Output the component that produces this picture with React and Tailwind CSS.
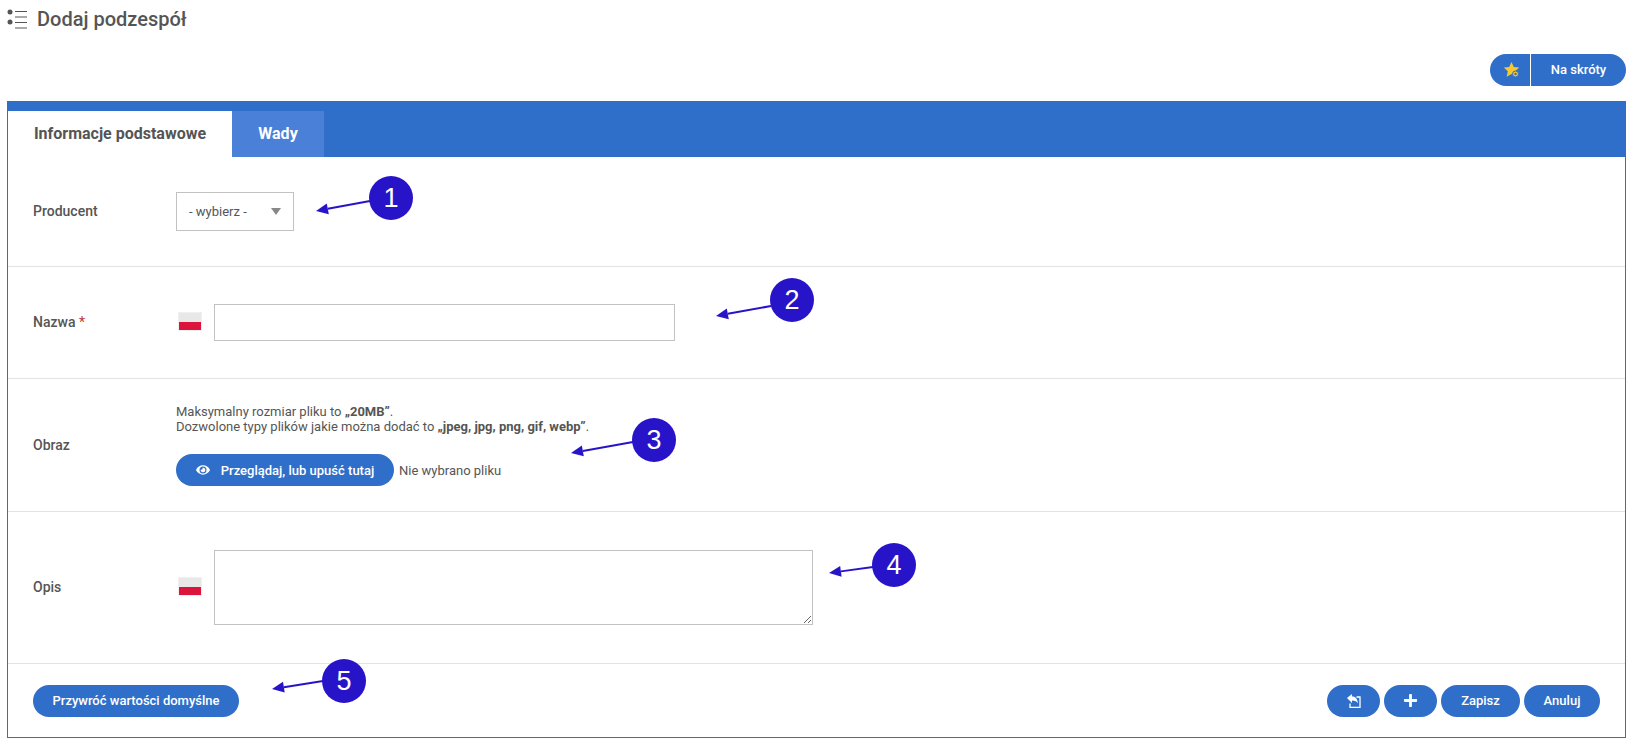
import { FaEye, FaPlus } from 'react-icons/fa'

function PillButton({ className = '', children }) {
    return (
        <button className={`h-8 rounded-full bg-[#306fc9] text-white text-[13px] font-medium flex items-center justify-center ${className}`}>
            {children}
        </button>
    )
}

function Flag() {
    return (
        <div className="w-[24px] h-[19px] ml-[2px] mb-[2px] flex flex-col shrink-0 border border-[#f0f0f0]">
            <div className="flex-1 bg-[#e8e8e8]" />
            <div className="flex-1 bg-[#dc143c]" />
        </div>
    )
}

function Row({ label, required, className = '', children }) {
    return (
        <div className={`flex items-center border-b border-[#e3e3e3] pl-[25px] ${className}`}>
            <div className="w-[143px] text-[14px] font-medium text-[#555555]">
                {label}
                {required && <span className="text-[#c0392b] font-normal"> *</span>}
            </div>
            {children}
        </div>
    )
}

function ListIcon() {
    return (
        <svg width="20" height="20" viewBox="0 0 20 20" className="shrink-0">
            <circle cx="3" cy="3" r="2.5" fill="#555555" />
            <circle cx="3" cy="13" r="2.5" fill="#555555" />
            <path d="M8 2.500h12M8 8h12M8 13.500h12M8 19h12" stroke="#555555" strokeWidth="1" />
        </svg>
    )
}

function StarIcon() {
    return (
        <svg width="18" height="18" viewBox="0 0 18 18">
            <path d="M8.500 1l2.300 5 5.400.6-4 3.700 1.100 5.400-4.800-2.800-4.800 2.800 1.100-5.400-4-3.700 5.400-.6z" fill="#f7c72c" />
            <circle cx="12.500" cy="13" r="3" fill="#f7c72c" stroke="#306fc9" strokeWidth="1" />
            <circle cx="12.500" cy="13" r="1.200" fill="#306fc9" />
        </svg>
    )
}

function BackIcon() {
    return (
        <svg width="14" height="14" viewBox="0 0 14 14">
            <path d="M9.500 3h3.500v10.300H3V9.500" fill="none" stroke="#ffffff" strokeWidth="1.300" />
            <path d="M0 4L5 0v2.500c3 0 5.500 1.800 6 7-1.200-2.200-3-3-6-3V9z" fill="#ffffff" />
        </svg>
    )
}

function Arrows() {
    const arrows = [
        [370, 201, 316, 211],
        [771, 306, 716, 316],
        [633, 442, 571, 453],
        [873, 567, 829, 573],
        [323, 681, 272, 689],
    ]
    return (
        <svg width="1630" height="740" className="absolute left-0 top-0 pointer-events-none">
            {arrows.map(([x1, y1, x2, y2]) => {
                const a = Math.atan2(y1 - y2, x1 - x2)
                const bx = x2 + Math.cos(a) * 12
                const by = y2 + Math.sin(a) * 12
                const nx = -Math.sin(a) * 5.5
                const ny = Math.cos(a) * 5.5
                return (
                    <g key={x2}>
                        <line x1={x1} y1={y1} x2={bx} y2={by} stroke="#2814c8" strokeWidth="2" />
                        <polygon points={`${x2},${y2} ${bx + nx},${by + ny} ${bx - nx},${by - ny}`} fill="#2814c8" />
                    </g>
                )
            })}
        </svg>
    )
}

function Badge({ className = '', children }) {
    return (
        <div className={`absolute w-11 h-11 rounded-full bg-[#2814c8] text-white text-[27px] flex items-center justify-center font-['Liberation_Sans',sans-serif] ${className}`}>
            {children}
        </div>
    )
}

export default function App() {
    return (
        <div className="relative w-[1630px] h-[740px] bg-white overflow-hidden font-['Roboto',sans-serif] text-[#555555]">
            <div className="h-[54px] pl-[7px] pt-[9px] flex items-start gap-[10px]">
                <ListIcon />
                <h1 className="text-[20px] leading-[20px] font-medium">Dodaj podzespół</h1>
            </div>

            <div className="flex justify-end pr-[4px] h-[47px]">
                <button className="h-8 w-[136px] rounded-full bg-[#306fc9] text-white text-[13px] font-medium flex items-center">
                    <span className="w-[41px] flex justify-center border-r border-white h-full items-center pl-1">
                        <StarIcon />
                    </span>
                    <span className="flex-1 text-center">Na skróty</span>
                </button>
            </div>

            <div className="ml-[7px] mr-[4px] h-[637px] border border-[#306fc9] flex flex-col">
                <div className="bg-[#306fc9] h-[55px] pt-[9px] flex items-stretch">
                    <div className="w-[224px] bg-white flex items-center justify-center text-[16px] font-bold">Informacje podstawowe</div>
                    <div className="w-[92px] bg-[#4a80d8] text-white flex items-center justify-center text-[16px] font-bold">Wady</div>
                </div>

                <Row label="Producent" className="h-[110px]">
                    <div className="w-[118px] h-[39px] border border-[#c2c2c2] flex items-center justify-between px-[12px] text-[13px]">
                        <span>- wybierz -</span>
                        <span className="w-0 h-0 border-x-[5.500px] border-x-transparent border-t-[7px] border-t-[#888888]" />
                    </div>
                </Row>

                <Row label="Nazwa" required className="h-[112px]">
                    <div className="flex items-center gap-[12px]">
                        <Flag />
                        <input className="w-[461px] h-[37px] border border-[#c2c2c2] outline-none" />
                    </div>
                </Row>

                <Row label="Obraz" className="h-[133px]">
                    <div className="text-[13px] leading-[15px]">
                        <p>Maksymalny rozmiar pliku to <b>„20MB”</b>.</p>
                        <p>Dozwolone typy plików jakie można dodać to <b>„jpeg, jpg, png, gif, webp”</b>.</p>
                        <div className="flex items-center gap-[5px] mt-[20px]">
                            <PillButton className="w-[218px] gap-[11px]">
                                <FaEye size={14} />
                                Przeglądaj, lub upuść tutaj
                            </PillButton>
                            <span>Nie wybrano pliku</span>
                        </div>
                    </div>
                </Row>

                <Row label="Opis" className="h-[152px]">
                    <div className="flex items-center gap-[12px]">
                        <Flag />
                        <textarea className="block w-[599px] h-[75px] border border-[#c2c2c2] outline-none" />
                    </div>
                </Row>

                <div className="flex-1 flex items-center justify-between px-[25px]">
                    <PillButton className="w-[206px]">Przywróć wartości domyślne</PillButton>
                    <div className="flex gap-1">
                        <PillButton className="w-[53px]"><BackIcon /></PillButton>
                        <PillButton className="w-[53px]"><FaPlus size={15} /></PillButton>
                        <PillButton className="w-[79px]">Zapisz</PillButton>
                        <PillButton className="w-[76px]">Anuluj</PillButton>
                    </div>
                </div>
            </div>

            <Arrows />
            <Badge className="left-[369px] top-[176px]">1</Badge>
            <Badge className="left-[770px] top-[278px]">2</Badge>
            <Badge className="left-[632px] top-[418px]">3</Badge>
            <Badge className="left-[872px] top-[543px]">4</Badge>
            <Badge className="left-[322px] top-[659px]">5</Badge>
        </div>
    )
}
